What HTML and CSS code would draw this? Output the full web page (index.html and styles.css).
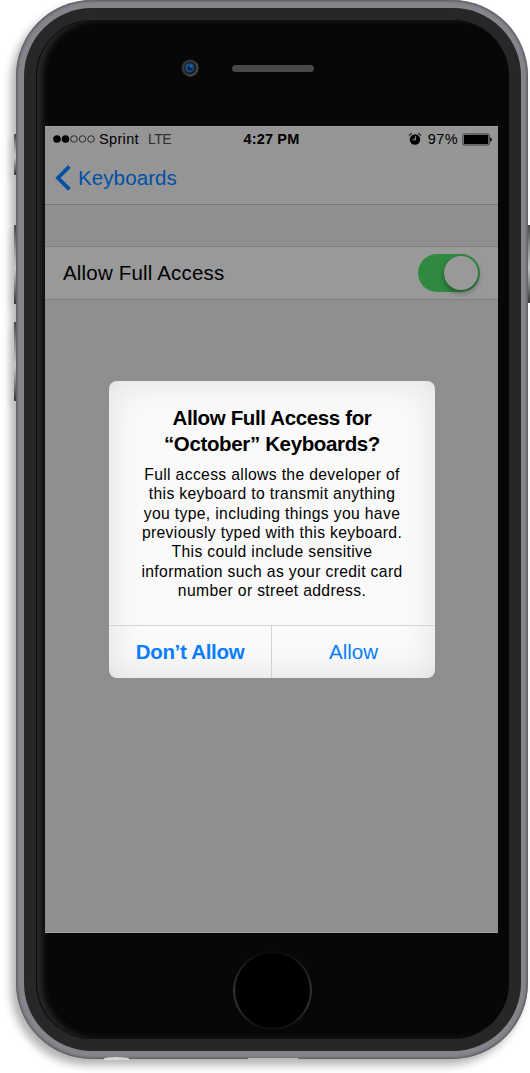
FILE: index.html
```html
<!DOCTYPE html>
<html lang="en">
<head>
<meta charset="utf-8">
<title>Keyboards</title>
<link rel="stylesheet" href="styles.css">
</head>
<body>
<div class="phone">
  <i class="key key-mute"></i>
  <i class="key key-up"></i>
  <i class="key key-down"></i>
  <i class="key key-power"></i>
  <i class="port port-jack"></i>
  <i class="port port-dock"></i>
  <div class="rim">
    <div class="face">
      <div class="top-hardware">
        <svg class="camera" width="20" height="20" viewBox="0 0 20 20">
          <circle cx="10" cy="10" r="8.5" fill="#343434"/>
          <path d="M16 4.8a8 8 0 0 1-8 12.8" fill="none" stroke="#4a4a4a" stroke-width="1.3"/>
          <circle cx="10" cy="10" r="5.9" fill="#1c1c20"/>
          <circle cx="9.6" cy="9.8" r="4.5" fill="#17508a"/>
          <circle cx="10" cy="10" r="2.6" fill="#082650"/>
          <circle cx="11.2" cy="8.4" r="1.2" fill="#2976b8"/>
        </svg>
        <div class="speaker"></div>
      </div>
      <div class="screen">
        <header class="nav">
          <div class="status">
            <div class="carrier">
              <svg class="signal" width="42" height="10" viewBox="0 0 42 10">
                <circle cx="4" cy="5" r="3.8"/><circle cx="12.5" cy="5" r="3.8"/>
                <g fill="none" stroke="#151515" stroke-width=".8"><circle cx="21" cy="5" r="3.3"/><circle cx="29.5" cy="5" r="3.3"/><circle cx="38" cy="5" r="3.3"/></g>
              </svg>
              <span class="operator">Sprint</span>
              <span class="network">LTE</span>
            </div>
            <span class="clock">4:27 PM</span>
            <div class="power">
              <svg class="alarm" width="14" height="14" viewBox="0 0 14 14">
                <circle cx="7" cy="7.5" r="5.2"/>
                <path d="M1.2 3.6Q2 1.7 3.9 1.5M12.8 3.6Q12 1.7 10.1 1.5" fill="none" stroke="#000" stroke-width="1.1"/>
                <path d="M7.3 4.2v3.6H4.6" fill="none" stroke="#969696" stroke-width="1.1"/>
              </svg>
              <span class="percent">97%</span>
              <svg class="battery" width="31" height="13" viewBox="0 0 31 13">
                <rect x=".9" y="1" width="26.4" height="11" rx="1.5" fill="none" stroke="#222" stroke-width=".8"/>
                <rect x="2" y="2.1" width="24.2" height="8.8" rx=".5"/>
                <path d="M28.2 4.3q1.6.5 1.6 2.2t-1.6 2.2z"/>
              </svg>
            </div>
          </div>
          <div class="back">
            <svg width="17" height="26" viewBox="0 0 17 26"><path d="M14.4 1.4 2.9 12.9l11.5 11.5" fill="none" stroke="#0050a8" stroke-width="3.7"/></svg>
            <span>Keyboards</span>
          </div>
        </header>
        <div class="setting">
          <span class="setting-name">Allow Full Access</span>
          <div class="switch"><div class="knob"></div></div>
        </div>
        <div class="dialog">
          <div class="message">
            <h1><span>Allow Full Access for</span><span>“October” Keyboards?</span></h1>
            <p>Full access allows the developer of<br>this keyboard to transmit anything<br>you type, including things you have<br>previously typed with this keyboard.<br>This could include sensitive<br>information such as your credit card<br>number or street address.</p>
          </div>
          <div class="actions">
            <div class="action deny"><span>Don’t Allow</span></div>
            <div class="action"><span>Allow</span></div>
          </div>
        </div>
      </div>
      <div class="home"></div>
    </div>
  </div>
</div>
</body>
</html>
```
FILE: styles.css
```css
* { box-sizing: border-box; }
body {
  margin: 0;
  height: 1073px;
  background: #fff;
  overflow: hidden;
  font-family: "Liberation Sans", Arial, sans-serif;
}
svg { display: block; flex: none; }

/* handset */
.phone {
  position: relative;
  width: 512px;
  height: 1059px;
  margin-left: 16px;
  padding: 8px 7px 8px 8px;
  border-radius: 76px;
  background: #85858c;
  box-shadow: inset 0 0 3px 1px #505054, -5px 6px 8px rgba(0, 0, 0, .3);
}
.rim {
  height: 1043px;
  padding: 12px;
  border-radius: 68px;
  background: #272727;
}
.face {
  display: flex;
  flex-direction: column;
  align-items: flex-start;
  height: 1019px;
  border-radius: 56px;
  background: #070707;
  box-shadow: inset 1px 0 1px #080808, inset 7px 0 7px -1px #2c2c2c;
}
.key {
  position: absolute;
  left: -2px;
  width: 2px;
  border-radius: 1px 0 0 1px;
  background: linear-gradient(#444, #85898a 25%, #c5c8c8 55%, #85898a 75%, #333);
  box-shadow: -4px 5px 5px rgba(0, 0, 0, .12);
}
.key-mute { top: 134px; height: 41px; }
.key-up { top: 225px; height: 79px; }
.key-down { top: 322px; height: 79px; }
.key-power { top: 225px; height: 78px; left: 512px; box-shadow: none; }
.port { position: absolute; }
.port-jack { left: 88px; top: 1057px; width: 25px; height: 3px; border-radius: 50% 50% 0 0; background: #d6d6d6; }
.port-dock { left: 232px; top: 1058px; width: 50px; height: 1px; background: #bbb; }

.top-hardware {
  display: flex;
  align-items: center;
  gap: 32px;
  height: 106px;
  width: 100%;
  padding: 0 0 10px 144px;
}
.speaker {
  width: 82px;
  height: 7px;
  margin-top: 1px;
  border-radius: 4px;
  background: #484848;
}
.home {
  width: 79px;
  height: 79px;
  margin: 18px 0 0 197px;
  border: 2.5px solid transparent;
  border-radius: 50%;
  background:
    linear-gradient(#000, #000) padding-box,
    linear-gradient(#0a0a0a, #303030 45%, #303030 70%, #0c0c0c) border-box;
}

/* screen */
.screen {
  display: flex;
  flex-direction: column;
  width: 453px;
  height: 807px;
  margin-left: 9px;
  background: #8f8f92;
  border: solid #a0a0a0;
  border-width: 1px 0;
}
.nav {
  height: 78px;
  background: #959595;
  border-bottom: 1px solid #77777a;
}
.status {
  display: grid;
  grid-template-columns: 1fr auto 1fr;
  align-items: center;
  height: 24px;
  padding: 0 5px 0 8px;
  font-size: 14.5px;
}
.carrier, .power { display: flex; align-items: center; }
.power { justify-content: flex-end; }
.operator { margin-left: 4px; letter-spacing: .35px; }
.network { margin-left: 9px; font-size: 14px; letter-spacing: -.5px; color: #2e2e2e; }
.clock { margin-right: 3px; font-weight: bold; letter-spacing: .15px; }
.percent { margin: 0 4px 0 6px; letter-spacing: .4px; }
.back {
  display: flex;
  align-items: center;
  gap: 6px;
  height: 53px;
  padding-left: 10px;
  font-size: 20.5px;
  letter-spacing: .1px;
  color: #0050a8;
}
.setting {
  display: flex;
  align-items: center;
  justify-content: space-between;
  height: 54px;
  margin-top: 41px;
  padding: 0 18px;
  background: #999;
  border: solid #7f7f83;
  border-width: 1px 0;
  font-size: 20.5px;
  letter-spacing: .18px;
}
.switch {
  display: flex;
  justify-content: flex-end;
  width: 62px;
  height: 38px;
  margin-top: -1px;
  padding: 2px;
  border-radius: 19px;
  background: #2f8a40;
}
.knob {
  width: 34px;
  height: 34px;
  border-radius: 50%;
  background: #999;
  box-shadow: 0 3px 6px rgba(0, 0, 0, .35);
}

/* permission dialog */
.dialog {
  width: 326px;
  height: 297px;
  margin: 81px 0 0 64px;
  border-radius: 8px;
  background: #fafafa;
  box-shadow: inset 0 0 35px rgba(0, 0, 0, .11);
  text-align: center;
  white-space: nowrap;
}
.message { height: 244px; padding-top: 24px; }
h1 {
  margin: 0;
  font-size: 20.5px;
  line-height: 26px;
  letter-spacing: -.36px;
}
h1 span { display: block; }
p {
  margin: 8px 0 0;
  font-size: 15.7px;
  line-height: 19.35px;
  letter-spacing: .35px;
}
.actions {
  display: grid;
  grid-template-columns: 1fr 1fr;
  height: 53px;
  border-top: 1px solid #d2d2d5;
  font-size: 20.5px;
  color: #087dff;
}
.action { display: flex; align-items: center; justify-content: center; }
.deny { border-right: 1px solid #d2d2d5; font-weight: bold; letter-spacing: -.3px; }
```
